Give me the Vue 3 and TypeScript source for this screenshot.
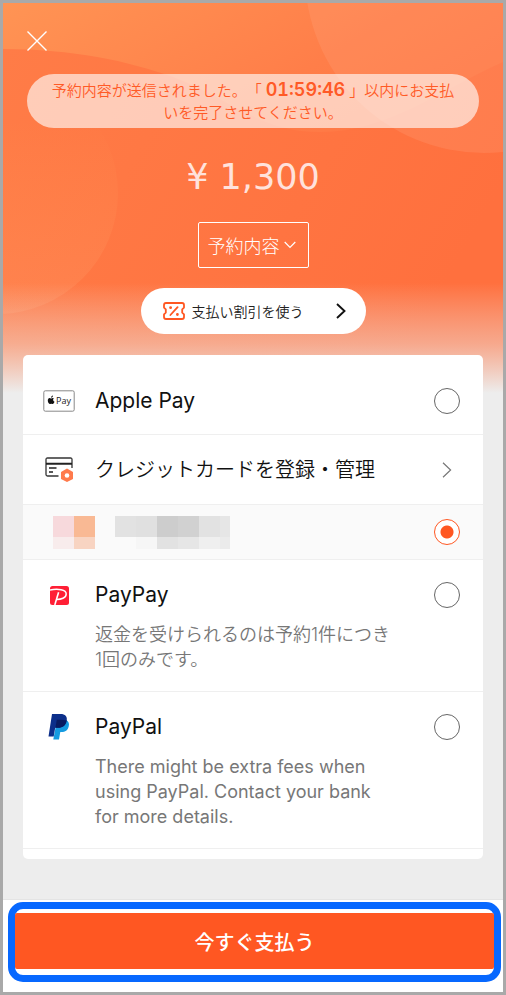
<script setup lang="ts">
import { ref } from 'vue'

const selected = ref<string>('card')
const timeLeft = '01:59:46'
const iconMosaic = ['#f7d9dc', '#f9b994', '#f8ecec', '#f8d4c2']
const numberMosaic = [
  '#e2e2e2', '#e0e0e0', '#cdcdcd', '#d1d1d1', '#e2e2e2', '#e6e6e6',
  '#fafafa', '#f6f6f6', '#e2e2e2', '#e6e6e6', '#efefef', '#ebebeb',
]
</script>

<template>
  <div class="screen">
    <main class="body">
      <svg class="backdrop" viewBox="0 0 500 390" preserveAspectRatio="none" aria-hidden="true">
        <defs>
          <linearGradient id="base" x1="0" y1="0" x2="0.75" y2="1">
            <stop offset="0" stop-color="#ff9454" />
            <stop offset="0.4" stop-color="#ff7e49" />
            <stop offset="1" stop-color="#ff6a3a" />
          </linearGradient>
          <linearGradient id="wave" x1="0" y1="0" x2="1" y2="0.4">
            <stop offset="0" stop-color="#ff7c47" />
            <stop offset="1" stop-color="#ff703e" />
          </linearGradient>
          <linearGradient id="orb" x1="0" y1="0" x2="0" y2="1">
            <stop offset="0.2" stop-color="#ffb060" stop-opacity="0" />
            <stop offset="1" stop-color="#ffa070" stop-opacity="0.25" />
          </linearGradient>
          <linearGradient id="fade" x1="0" y1="0" x2="0" y2="1">
            <stop offset="0" stop-color="#ededed" stop-opacity="0" />
            <stop offset="0.55" stop-color="#efdcd5" stop-opacity="0.52" />
            <stop offset="1" stop-color="#ededed" />
          </linearGradient>
        </defs>
        <rect width="500" height="390" fill="url(#base)" />
        <path d="M0 46C70 46 125 58 170 74C225 94 255 129 317 129C385 129 435 88 500 59V390H0Z" fill="url(#wave)" />
        <circle cx="481" cy="-29" r="179" fill="#ffb08c" fill-opacity="0.2" />
        <circle cx="-6" cy="190" r="121" fill="url(#orb)" />
        <rect y="280" width="500" height="110" fill="url(#fade)" />
      </svg>

      <button class="close" type="button" aria-label="閉じる">
        <svg width="20" height="20" viewBox="0 0 20 20"><path d="M.5.5 19.5 19.5M19.5.5.5 19.5" fill="none" stroke="#fff" stroke-width="1.4" /></svg>
      </button>

      <p class="notice">予約内容が送信されました。「<strong>{{ timeLeft }}</strong>」以内にお支払いを完了させてください。</p>

      <p class="price">¥ 1,300</p>

      <button class="details" type="button">
        予約内容
        <svg width="12" height="8" viewBox="0 0 12 8"><path d="M.7 1 6 6.5 11.3 1" fill="none" stroke="#fff" stroke-width="1.2" /></svg>
      </button>

      <button class="discount" type="button">
        <svg width="22" height="18" viewBox="0 0 22 18" fill="none" stroke="#ff5722" stroke-width="1.8" stroke-linecap="round" stroke-linejoin="round">
          <path d="M3 1H19Q21 1 21 3V5.6L19.2 7.3V10.7L21 12.4V15Q21 17 19 17H3Q1 17 1 15V12.4L2.8 10.7V7.3L1 5.6V3Q1 1 3 1Z" />
          <path d="M7.4 13 14.6 5.2" />
          <path d="M7.6 5.6v.1M14.4 12.4v.1" stroke-width="2.8" />
        </svg>
        <span class="discount-label">支払い割引を使う</span>
        <svg width="10" height="16" viewBox="0 0 10 16"><path d="M1 1 8.5 8 1 15" fill="none" stroke="#111" stroke-width="1.9" /></svg>
      </button>

      <section class="card">
        <label class="row first">
          <span class="icon">
            <svg width="32" height="22" viewBox="0 0 32 22">
              <rect x=".8" y=".8" width="30.4" height="20.4" rx="1.5" fill="#fff" stroke="#888" />
              <path d="M10.9 8.3Q10 7.7 9 8.2Q8.1 8.6 7.3 8.2C5.8 7.7 4.7 9.1 4.8 10.8C4.9 12.4 6 14.2 7.1 14.1Q8.2 13.5 9.2 14C10.3 14.4 11.2 12.8 11.5 11.8C9.8 11.1 9.7 9.1 10.9 8.3Z" fill="#111" />
              <path d="M8.1 7.7C8 6.5 8.8 5.6 9.9 5.4C10.1 6.5 9.2 7.6 8.1 7.7Z" fill="#111" />
              <text x="13" y="14" class="mark">Pay</text>
            </svg>
          </span>
          <span class="name">Apple Pay</span>
          <input v-model="selected" class="radio" type="radio" name="method" value="apple">
        </label>

        <button class="row manage" type="button">
          <span class="icon">
            <svg width="28" height="25" viewBox="0 0 28 25">
              <path d="M27 11V2.5Q27 1 25.5 1H2.5Q1 1 1 2.5V17.5Q1 19 2.5 19H13.5" fill="none" stroke="#333" stroke-width="1.3" />
              <path d="M1 6.8H27" stroke="#222" stroke-width="2" />
              <path d="M4 11H11.5M4 15H8" stroke="#222" stroke-width="1.3" />
              <path d="M22 11.5 28 15V22L22 25 16 22V15Z" fill="#ff7a4c" />
              <circle cx="22" cy="18.5" r="2.3" fill="#fff" />
            </svg>
          </span>
          <span class="name">クレジットカードを登録・管理</span>
          <span class="arrow">
            <svg width="10" height="16" viewBox="0 0 10 16"><path d="M1 .8 8.6 8 1 15.2" fill="none" stroke="#777" stroke-width="1.2" /></svg>
          </span>
        </button>

        <label class="row saved">
          <span class="icon">
            <span class="mosaic small"><i v-for="(c, n) in iconMosaic" :key="n" :style="{ background: c }" /></span>
          </span>
          <span class="mosaic large"><i v-for="(c, n) in numberMosaic" :key="n" :style="{ background: c }" /></span>
          <input v-model="selected" class="radio" type="radio" name="method" value="card" aria-label="登録済みカード">
        </label>

        <label class="row detailed">
          <span class="icon">
            <svg width="19" height="19" viewBox="0 0 19 19">
              <rect width="19" height="19" rx="2.5" fill="#ff1f35" />
              <path d="M0 4C8 2.5 16.2 3.6 16.2 8C16.2 12 11 13.6 6 13.4" fill="none" stroke="#fff" stroke-width="1.5" />
              <path d="M8.6 6.2 4.8 19" stroke="#fff" stroke-width="1.6" />
            </svg>
          </span>
          <span class="name">PayPay</span>
          <input v-model="selected" class="radio" type="radio" name="method" value="paypay">
          <span class="desc ja">返金を受けられるのは予約1件につき1回のみです。</span>
        </label>

        <label class="row detailed">
          <span class="icon">
            <svg width="22" height="26" viewBox="0 0 22 26">
              <path d="M9 6H18.3C20.7 7.5 21.5 9.8 20.7 12.5C19.8 16.4 17.2 18 13.5 18H12.3L11 25.5H5.3Z" fill="#159be0" />
              <path d="M4 0H12.5C17.2 0 19.5 2.4 18.7 6.5C17.8 11.6 14.8 13.8 10 13.8H7.2L5.7 22.5H.5Z" fill="#0c2f8a" />
              <path d="M8.8 5.8C12.5 5.5 16 5.5 18.7 6.5C17.8 11.6 14.8 13.8 10 13.8H7.4Z" fill="#081b60" />
            </svg>
          </span>
          <span class="name">PayPal</span>
          <input v-model="selected" class="radio" type="radio" name="method" value="paypal">
          <span class="desc">There might be extra fees when using PayPal. Contact your bank for more details.</span>
        </label>
      </section>
    </main>

    <footer class="footer">
      <div class="focus">
        <button class="pay" type="button">今すぐ支払う</button>
      </div>
    </footer>
  </div>
</template>

<style>
body {
  margin: 0;
}
</style>

<style scoped>
.screen {
  box-sizing: border-box;
  min-height: 100vh;
  display: flex;
  flex-direction: column;
  border: 3px solid #a9a9a9;
  background: #ededed;
  font-family: "Noto Sans CJK JP", sans-serif;
}

button {
  margin: 0;
  padding: 0;
  border: 0;
  background: none;
  font: inherit;
  color: inherit;
  cursor: pointer;
}

svg {
  display: block;
  flex: none;
}

.body {
  position: relative;
  flex: 1;
  display: flex;
  flex-direction: column;
  align-items: center;
  padding: 28px 20px 40px;
}

.body > * {
  position: relative;
}

.body > .backdrop {
  position: absolute;
  top: 0;
  left: 0;
  width: 100%;
  height: 390px;
}

.close {
  align-self: flex-start;
  margin-left: 4px;
}

.notice {
  box-sizing: border-box;
  align-self: stretch;
  margin: 23px 4px 0;
  padding: 5px 20px;
  border-radius: 27px;
  background: rgba(255, 255, 255, 0.62);
  color: #ff5a26;
  font-size: 15px;
  font-weight: 350;
  line-height: 22px;
  text-align: center;
  text-spacing-trim: space-all;
}

.notice strong {
  margin: 0 4px;
  font-family: Inter, sans-serif;
  font-size: 18px;
  font-weight: 600;
  font-variant-numeric: tabular-nums;
}

.price {
  margin: 28px 0 0;
  color: #ffe2dc;
  font-family: "DejaVu Sans", sans-serif;
  font-size: 35px;
  line-height: 42px;
}

.details {
  display: flex;
  align-items: center;
  gap: 4px;
  margin-top: 24px;
  padding: 0 12px 0 9px;
  height: 46px;
  border: 1px solid #fff;
  border-radius: 2px;
  color: #fff;
  font-size: 18px;
  font-weight: 300;
}

.discount {
  box-sizing: border-box;
  display: flex;
  align-items: center;
  gap: 7px;
  width: 225px;
  height: 46px;
  margin-top: 20px;
  padding: 0 20px 0 22px;
  border-radius: 23px;
  background: #fff;
  color: #222;
  font-size: 14px;
  font-weight: 350;
}

.discount-label {
  flex: 1;
  text-align: left;
}

.card {
  align-self: stretch;
  margin-top: 21px;
  padding-bottom: 10px;
  border-radius: 5px;
  background: #fff;
  overflow: hidden;
}

.row {
  box-sizing: border-box;
  width: 100%;
  display: grid;
  grid-template-columns: 72px 1fr 49px;
  align-items: center;
  border-bottom: 1px solid #efefef;
  color: #111;
  text-align: left;
}

.first {
  height: 80px;
  padding-top: 12px;
}

.manage {
  height: 70px;
}

.saved {
  height: 55px;
  background: #fafafa;
}

.detailed {
  align-content: start;
  row-gap: 12px;
  padding: 20px 0 19px;
}

.icon {
  display: flex;
  justify-content: center;
}

.mark {
  font-family: "Open Sans", sans-serif;
  font-size: 9px;
  fill: #222;
}

.name {
  font-family: Inter, "Noto Sans CJK JP", sans-serif;
  font-size: 21px;
  line-height: 30px;
}

.manage .name {
  font-size: 20px;
  font-weight: 350;
}

.desc {
  grid-column: 2;
  max-width: 298px;
  color: #777;
  font-family: Inter, "Noto Sans CJK JP", sans-serif;
  font-size: 18px;
  line-height: 25px;
}

.ja {
  font-weight: 350;
}

.radio {
  appearance: none;
  box-sizing: border-box;
  width: 26px;
  height: 26px;
  margin: 0;
  border: 1px solid #666;
  border-radius: 50%;
  background: #fff;
}

.radio:checked {
  border-color: #ff5722;
  background: radial-gradient(circle, #ff5722 6px, #fff 7px);
}

.arrow {
  padding-left: 8px;
}

.mosaic {
  display: grid;
  grid-template-rows: 21px 12px;
}

.small {
  grid-template-columns: 21px 21px;
}

.large {
  grid-template-columns: 21px 21px 21px 21px 21px 10px;
  margin-left: 20px;
}

.saved .icon {
  justify-content: flex-end;
}

.footer {
  padding: 2px 2px 10px 5px;
  border-top: 1px solid #e4e4e4;
  background: #fff;
}

.focus {
  padding: 4px 0 6px;
  border: 7px solid #0768ff;
  border-radius: 15px;
}

.pay {
  display: block;
  width: 100%;
  height: 56px;
  border-radius: 2px;
  background: #ff5722;
  color: #fff;
  font-size: 20px;
  font-weight: 500;
}
</style>
